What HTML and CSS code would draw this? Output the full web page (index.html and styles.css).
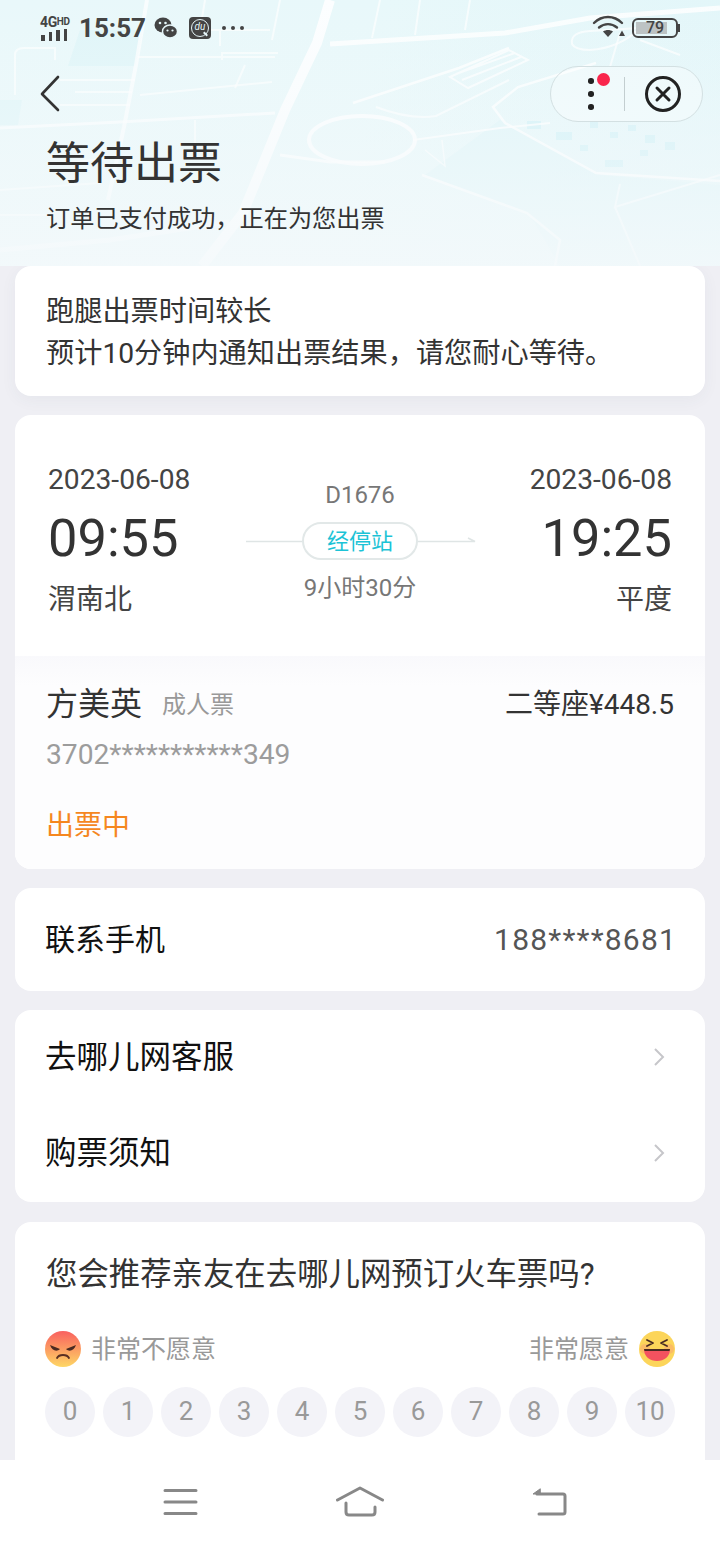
FILE: index.html
```html
<!DOCTYPE html>
<html lang="zh-CN">
<head>
    <meta charset="UTF-8">
    <title>等待出票</title>
    <meta name="viewport" content="width=device-width, initial-scale=1">
    <link rel="stylesheet" href="styles.css">
</head>
<body>
    <div class="page">
        <div class="content">
            <header class="hero">
                <svg class="map" width="720" height="266" viewBox="0 0 720 266" fill="none" stroke="#fff">
                    <defs>
                        <linearGradient id="fade" x1="0" y1="0" x2="0" y2="1">
                            <stop offset="0" stop-color="#f4f9fb" stop-opacity="0"/>
                            <stop offset="1" stop-color="#f4f9fb" stop-opacity=".85"/>
                        </linearGradient>
                    </defs>
                    <!-- tinted blocks -->
                    <path class="map-block" d="M80 30 H143 L135 66 H68 Z" stroke="none"/>
                    <path class="map-block" d="M0 100 H22 L18 125 H0 Z" stroke="none"/>
                    <path class="map-block" d="M500 120 L600 175 L720 185 V266 H560 L530 215 L425 175 Z" stroke="none"/>
                    <path class="map-tile" d="M527 121 h14 v8 h-14z M556 132 h16 v8 h-16z M590 122 h8 v6 h-8z M610 132 h8 v6 h-8z M628 125 h8 v6 h-8z M645 135 h10 v8 h-10z M665 142 h10 v8 h-10z M605 160 h18 v7 h-18z M640 150 h8 v6 h-8z M580 145 h8 v6 h-8z" stroke="none"/>
                    <!-- main roads -->
                    <path d="M330 0 L317 43 L285 110 L243 213 L202 266" stroke-width="10" stroke-opacity=".85"/>
                    <path d="M147 0 L136 65 L124 127 L108 200" stroke-width="4" stroke-opacity=".7"/>
                    <path d="M330 44 L505 33 L590 18 L720 8" stroke-width="5" stroke-opacity=".8"/>
                    <path d="M0 128 L120 122 L275 113" stroke-width="3" stroke-opacity=".7"/>
                    <path d="M0 250 L110 240 L229 222" stroke-width="5" stroke-opacity=".6"/>
                    <!-- side streets -->
                    <g stroke-width="2" stroke-opacity=".65">
                        <path d="M15 95 V55 Q15 48 24 48 H55 V60"/>
                        <path d="M138 57 H275 M222 60 V53 H278 M245 65 L235 88"/>
                        <path d="M60 80 H135 M75 92 H132 M60 105 H130"/>
                        <path d="M140 95 L272 82 M195 120 V160 M50 165 L110 158"/>
                        <path d="M280 0 L272 40 M205 0 L200 30 H270 M220 30 V46"/>
                        <path d="M380 0 L372 38 M420 0 L415 35 M470 0 L465 30"/>
                        <path d="M0 190 L100 183 M0 215 H50"/>
                    </g>
                    <!-- track -->
                    <ellipse cx="362" cy="140" rx="53" ry="24" stroke-width="4" stroke-opacity=".85"/>
                    <path d="M280 155 L330 162 L385 162" stroke-width="3" stroke-opacity=".8"/>
                    <!-- hatch block -->
                    <path d="M450 77 L509 50 L528 60 L468 88 Z M456 74 L515 53 M462 80 L521 57" stroke-width="2" stroke-opacity=".75"/>
                    <path d="M353 103 L459 68 L509 48" stroke-width="2.5" stroke-opacity=".8"/>
                    <path d="M376 107 Q410 120 436 116 L509 80" stroke-width="2" stroke-opacity=".7"/>
                    <!-- big loop -->
                    <path d="M596 63 L518 87 L493 107 L505 123 L596 173 L720 181" stroke-width="2.5" stroke-opacity=".8"/>
                    <path d="M413 140 L500 128 L550 123" stroke-width="2" stroke-opacity=".8"/>
                    <path d="M425 150 L445 166 L442 140" stroke-width="1.5" stroke-opacity=".7"/>
                    <path d="M422 175 L527 213 L560 240 L555 266" stroke-width="2.5" stroke-opacity=".75"/>
                    <path d="M620 184 L615 207 L720 175 M615 207 L640 266" stroke-width="2" stroke-opacity=".65"/>
                    <path d="M572 44 Q570 32 590 31 L640 28 Q620 48 590 50 Q575 50 572 44 Z" stroke-width="2" stroke-opacity=".7"/>
                    <path d="M620 33 L610 67 M640 40 L680 55" stroke-width="2" stroke-opacity=".7"/>
                    <rect width="720" height="266" y="0" fill="url(#fade)" stroke="none"/>
                </svg>
                <div class="statusbar">
                    <div class="signal">
                        <span class="signal-label">4G<small>HD</small></span>
                        <span class="signal-bars"><i class="b1"></i><i class="b2"></i><i class="b3"></i><i class="b4"></i></span>
                    </div>
                    <span class="clock">15:57</span>
                    <svg class="status-icon" width="24" height="24" viewBox="0 0 24 24" fill="#444">
                        <ellipse cx="9" cy="9" rx="8.5" ry="7.5"/>
                        <ellipse cx="16" cy="15.5" rx="7.5" ry="6.5" stroke="#e6f6f9" stroke-width="1.4"/>
                        <circle cx="6" cy="7" r="1.3" fill="#e6f6f9"/>
                        <circle cx="11.5" cy="7" r="1.3" fill="#e6f6f9"/>
                        <circle cx="13.5" cy="14.5" r="1.1" fill="#e6f6f9"/>
                        <circle cx="18.5" cy="14.5" r="1.1" fill="#e6f6f9"/>
                    </svg>
                    <span class="du-icon"><span class="du-ring">du</span></span>
                    <span class="status-dots"><i></i><i></i><i></i></span>
                    <div class="status-right">
                        <svg width="34" height="26" viewBox="0 0 34 26" fill="none" stroke="#444" stroke-width="2.4" stroke-linecap="round">
                            <path d="M2 8 C10 0 22 0 30 8"/>
                            <path d="M7 12.5 C12.5 8 19.5 8 25 12.5"/>
                            <path d="M16 22 L11 16.5 C14 14.5 18 14.5 21 16.5 Z" fill="#444" stroke="none"/>
                            <path d="M27 21 L30 15.5 L33 21 Z" fill="#444" stroke="none"/>
                        </svg>
                        <div class="battery">
                            <span class="battery-fill"></span>
                            <span class="battery-num">79</span>
                        </div>
                        <span class="battery-cap"></span>
                    </div>
                </div>
                <div class="topbar">
                    <svg class="back" width="24" height="40" viewBox="0 0 24 40" fill="none" stroke="#333" stroke-width="2.6" stroke-linecap="round" stroke-linejoin="round">
                        <path d="M19 3 L3 20 L19 36"/>
                    </svg>
                    <div class="capsule">
                        <div class="capsule-more">
                            <i></i><i></i><i></i>
                            <b class="red-dot"></b>
                        </div>
                        <span class="capsule-line"></span>
                        <svg width="38" height="38" viewBox="0 0 38 38" fill="none" stroke="#222" stroke-width="3" stroke-linecap="round">
                            <circle cx="19" cy="19" r="16.5"/>
                            <path d="M13 13 L25 25 M25 13 L13 25"/>
                        </svg>
                    </div>
                </div>
                <h1 class="title">等待出票</h1>
                <p class="subtitle">订单已支付成功，正在为您出票</p>
            </header>

            <main class="cards">
                <section class="card notice">
                    <p>跑腿出票时间较长</p>
                    <p>预计10分钟内通知出票结果，请您耐心等待。</p>
                </section>

                <section class="card ticket">
                    <div class="journey">
                        <div class="stop">
                            <div class="date">2023-06-08</div>
                            <div class="time">09:55</div>
                            <div class="station">渭南北</div>
                        </div>
                        <div class="train">
                            <div class="train-no">D1676</div>
                            <div class="via">
                                <svg class="via-line" width="231" height="8" viewBox="0 0 231 8" fill="none" stroke="#dfe5e5" stroke-width="1.5">
                                    <path d="M0 4.5 H229 L222 1"/>
                                </svg>
                                <span class="via-pill">经停站</span>
                            </div>
                            <div class="duration">9小时30分</div>
                        </div>
                        <div class="stop stop-end">
                            <div class="date">2023-06-08</div>
                            <div class="time">19:25</div>
                            <div class="station">平度</div>
                        </div>
                    </div>
                    <div class="passenger">
                        <div class="passenger-top">
                            <span class="name">方美英</span>
                            <span class="ticket-type">成人票</span>
                            <span class="seat">二等座¥448.5</span>
                        </div>
                        <div class="id-no">3702***********349</div>
                        <div class="ticket-status">出票中</div>
                    </div>
                </section>

                <section class="card contact">
                    <span class="contact-label">联系手机</span>
                    <span class="contact-phone">188****8681</span>
                </section>

                <section class="card links">
                    <div class="link-row">
                        <span>去哪儿网客服</span>
                        <svg width="12" height="20" viewBox="0 0 12 20" fill="none" stroke="#c6c6ca" stroke-width="2"><path d="M2 2 L10 10 L2 18"/></svg>
                    </div>
                    <div class="link-row">
                        <span>购票须知</span>
                        <svg width="12" height="20" viewBox="0 0 12 20" fill="none" stroke="#c6c6ca" stroke-width="2"><path d="M2 2 L10 10 L2 18"/></svg>
                    </div>
                </section>

                <section class="card survey">
                    <h2 class="question">您会推荐亲友在去哪儿网预订火车票吗?</h2>
                    <div class="scale-labels">
                        <div class="scale-side">
                            <svg width="36" height="36" viewBox="0 0 36 36">
                                <defs>
                                    <linearGradient id="angry" x1="0" y1="0" x2="0" y2="1">
                                        <stop offset="0" stop-color="#f9605f"/>
                                        <stop offset="1" stop-color="#fed765"/>
                                    </linearGradient>
                                </defs>
                                <circle cx="18" cy="18" r="18" fill="url(#angry)"/>
                                <path d="M5 14 L15 18 C12 21 7 20 5 14 Z M31 14 L21 18 C24 21 29 20 31 14 Z" fill="#4a2a22"/>
                                <path d="M12 27 C14 23 22 23 24 27" fill="none" stroke="#5a2f22" stroke-width="1.8" stroke-linecap="round"/>
                            </svg>
                            <span>非常不愿意</span>
                        </div>
                        <div class="scale-side">
                            <span>非常愿意</span>
                            <svg width="36" height="36" viewBox="0 0 36 36">
                                <circle cx="18" cy="18" r="18" fill="#fcd55a"/>
                                <circle cx="6" cy="18" r="5" fill="#fbb16a" opacity=".7"/>
                                <circle cx="30" cy="18" r="5" fill="#fbb16a" opacity=".7"/>
                                <path d="M8 9 L14 12 L8 15 M28 9 L22 12 L28 15" fill="none" stroke="#4a2a22" stroke-width="1.8" stroke-linecap="round" stroke-linejoin="round"/>
                                <path d="M5 18 H31 C31 26 25 30 18 30 C11 30 5 26 5 18 Z" fill="#f4525f"/>
                                <path d="M5 18 H31 L30.5 20 H5.5 Z" fill="#4a2a22"/>
                            </svg>
                        </div>
                    </div>
                    <div class="scale">
                        <span>0</span><span>1</span><span>2</span><span>3</span><span>4</span><span>5</span><span>6</span><span>7</span><span>8</span><span>9</span><span>10</span>
                    </div>
                </section>
            </main>
        </div>

        <nav class="navbar">
            <svg width="36" height="28" viewBox="0 0 36 28" fill="none" stroke="#888" stroke-width="3" stroke-linecap="round">
                <path d="M3 2.5 H34 M3 14 H34 M3 25.5 H34"/>
            </svg>
            <svg class="nav-home" width="48" height="32" viewBox="0 0 48 32" fill="none" stroke="#888" stroke-width="3" stroke-linecap="round" stroke-linejoin="round">
                <path d="M1.5 14 L24 2 L46.5 14"/>
                <path d="M10 17 V26 Q10 29 13 29 H36 Q39 29 39 26 V21"/>
            </svg>
            <svg class="nav-back" width="36" height="30" viewBox="0 0 36 30" fill="none" stroke="#888" stroke-width="3" stroke-linecap="round" stroke-linejoin="round">
                <path d="M6 7 H32 Q34 7 34 9 V25 Q34 27 32 27 H8"/>
                <path d="M9 2 L2 7 H9 Z" fill="#888" stroke-width="1"/>
            </svg>
        </nav>
    </div>
</body>
</html>
```

FILE: styles.css
```css
* {
    box-sizing: border-box;
}
html, body {
    margin: 0;
    padding: 0;
}
body {
    font-family: Roboto, "Noto Sans CJK SC", sans-serif;
    color: #333;
    background: #efeff4;
}
p, h1, h2 {
    margin: 0;
    font-weight: 400;
}
.page {
    width: 720px;
    height: 1544px;
    display: flex;
    flex-direction: column;
    overflow: hidden;
    background: #efeff4;
}
.content {
    flex: 1;
    min-height: 0;
    overflow: hidden;
}

/* hero */
.hero {
    position: relative;
    height: 266px;
    padding-top: 10px;
    overflow: hidden;
    background: linear-gradient(100deg, #e9f8fa 0%, #e8f8fa 50%, #e2f6f9 100%);
}
.map {
    position: absolute;
    left: 0;
    top: 0;
}
.map-block {
    fill: #d8f3f7;
    opacity: .6;
}
.map-tile {
    fill: #c6eef5;
    opacity: .7;
}
.statusbar {
    position: relative;
    display: flex;
    align-items: center;
    height: 36px;
    padding-left: 40px;
    color: #444;
}
.signal {
    width: 31px;
    margin-right: 8px;
}
.signal-label {
    display: block;
    font-size: 14px;
    font-weight: 700;
    line-height: 11px;
    letter-spacing: -.4px;
}
.signal-label small {
    font-size: 10px;
    vertical-align: 2px;
}
.signal-bars {
    display: flex;
    align-items: flex-end;
    gap: 4px;
    height: 12px;
    margin-top: 1px;
    padding-left: 1px;
}
.signal-bars i {
    display: block;
    width: 3.5px;
    background: #444;
}
.signal-bars .b1 { height: 6px; }
.signal-bars .b2 { height: 9px; }
.signal-bars .b3 { height: 11px; }
.signal-bars .b4 { height: 12px; }
.clock {
    font-size: 26px;
    font-weight: 700;
    line-height: 36px;
}
.status-icon {
    margin-left: 8px;
}
.du-icon {
    position: relative;
    display: flex;
    align-items: center;
    justify-content: center;
    width: 22px;
    height: 22px;
    margin-left: 11px;
    background: #444;
    border-radius: 4px;
}
.du-icon::after {
    content: "";
    position: absolute;
    right: 3px;
    bottom: 4px;
    width: 5px;
    height: 2px;
    background: #e6f6f9;
    transform: rotate(45deg);
}
.du-ring {
    width: 18px;
    height: 18px;
    border: 1.5px solid #e6f6f9;
    border-radius: 50%;
    color: #e6f6f9;
    font-size: 10px;
    font-style: italic;
    line-height: 14px;
    text-align: center;
}
.status-dots {
    display: flex;
    gap: 5px;
    margin-left: 11px;
}
.status-dots i {
    width: 4px;
    height: 4px;
    background: #444;
    border-radius: 50%;
}
.status-right {
    display: flex;
    align-items: center;
    margin-left: auto;
    padding-right: 40px;
}
.battery {
    position: relative;
    width: 46px;
    height: 20px;
    margin-left: 6px;
    border: 2px solid #444;
    border-radius: 6px;
    padding: 2px;
}
.battery-fill {
    display: block;
    width: 31px;
    height: 12px;
    background: #bdc3c4;
}
.battery-num {
    position: absolute;
    left: 0;
    right: 0;
    top: -1px;
    font-size: 16px;
    font-weight: 500;
    line-height: 18px;
    text-align: center;
}
.battery-cap {
    width: 2px;
    height: 8px;
    background: #444;
}
.topbar {
    position: relative;
    display: flex;
    align-items: center;
    justify-content: space-between;
    height: 56px;
    margin-top: 20px;
    padding: 0 17px 0 39px;
}
.capsule {
    display: flex;
    align-items: center;
    width: 153px;
    height: 56px;
    padding-left: 37px;
    border: 1px solid #d3e0e2;
    border-radius: 28px;
    background: rgba(255, 255, 255, .35);
}
.capsule-more {
    position: relative;
    display: flex;
    flex-direction: column;
    gap: 7.5px;
    width: 5.5px;
}
.capsule-more i {
    width: 5.5px;
    height: 5.5px;
    background: #222;
    border-radius: 50%;
}
.red-dot {
    position: absolute;
    left: 9px;
    top: -5px;
    width: 13px;
    height: 13px;
    background: #f9254c;
    border-radius: 50%;
}
.capsule-line {
    width: 1px;
    height: 34px;
    margin: 0 19px 0 30.5px;
    background: #c3ced0;
}
.title {
    position: relative;
    margin: 16px 0 0 46px;
    font-size: 44px;
    line-height: 52px;
}
.subtitle {
    position: relative;
    margin: 12px 0 0 46px;
    font-size: 24.2px;
    line-height: 34px;
}

/* cards */
.cards {
    display: flex;
    flex-direction: column;
    gap: 19px;
    padding: 0 15px;
}
.card {
    background: #fff;
    border-radius: 16px;
    overflow: hidden;
}
.notice {
    padding: 25px 31px 21px;
    font-size: 28.2px;
    line-height: 42px;
    height: 130px;
    box-shadow: 0 4px 16px rgba(60, 80, 90, .05);
}

/* ticket */
.journey {
    display: grid;
    grid-template-columns: 1fr 230px 1fr;
    height: 241px;
    padding: 48px 33px 0;
}
.date {
    font-size: 28.2px;
    line-height: 34px;
    color: #444;
}
.time {
    margin-top: 11px;
    font-size: 52.4px;
    line-height: 60px;
}
.station {
    margin-top: 14px;
    font-size: 28px;
    line-height: 36px;
    color: #444;
}
.stop-end {
    text-align: right;
}
.train {
    display: flex;
    flex-direction: column;
    align-items: center;
    padding-top: 16px;
    color: #777;
}
.train-no {
    font-size: 24px;
    line-height: 32px;
}
.via {
    position: relative;
    display: flex;
    justify-content: center;
    width: 230px;
    margin-top: 11px;
}
.via-line {
    position: absolute;
    left: 1px;
    top: 15px;
}
.via-pill {
    position: relative;
    width: 116px;
    height: 38px;
    border: 2px solid #e2e8e8;
    border-radius: 19px;
    background: #fff;
    color: #1cc3d6;
    font-size: 22px;
    line-height: 36px;
    text-align: center;
}
.duration {
    margin-top: 10px;
    font-size: 24px;
    line-height: 36px;
}
.passenger {
    height: 213px;
    padding: 28px 31px 0;
    background: linear-gradient(#f9f9fc, #fdfdfe 30px);
}
.passenger-top {
    display: flex;
    align-items: center;
    height: 40px;
}
.name {
    font-size: 32px;
    line-height: 40px;
}
.ticket-type {
    margin: 0 0 4px 20px;
    font-size: 24px;
    color: #999;
}
.seat {
    margin: 0 0 4px auto;
    font-size: 28px;
}
.id-no {
    margin-top: 11px;
    font-size: 28.2px;
    line-height: 40px;
    color: #9c9c9c;
}
.ticket-status {
    margin-top: 31px;
    font-size: 28px;
    line-height: 40px;
    color: #f5871f;
}

/* contact + links */
.contact {
    display: flex;
    align-items: center;
    justify-content: space-between;
    height: 103px;
    padding: 0 28px 0 30px;
}
.contact-label {
    margin-bottom: 6px;
    font-size: 30px;
    color: #111;
}
.contact-phone {
    font-size: 30px;
    letter-spacing: 1.2px;
    color: #555;
}
.link-row {
    display: flex;
    align-items: center;
    justify-content: space-between;
    height: 96px;
    padding: 0 40px 0 30px;
    font-size: 31.5px;
    color: #111;
}
.link-row span {
    margin-bottom: 8px;
}
.link-row svg {
    margin-bottom: 2px;
}

/* survey */
.survey {
    height: 300px;
    margin-top: 1px;
    padding: 31px 30px 0;
}
.question {
    margin-left: 1px;
    font-size: 31.4px;
    line-height: 44px;
}
.scale-labels {
    display: flex;
    justify-content: space-between;
    height: 36px;
    margin-top: 34px;
}
.scale-side {
    display: flex;
    align-items: center;
    gap: 10px;
    font-size: 25px;
    color: #999;
}
.scale-side span {
    margin-top: 2px;
    line-height: 30px;
}
.scale {
    display: flex;
    gap: 8px;
    margin-top: 20px;
}
.scale span {
    width: 50px;
    height: 50px;
    background: #f3f3f8;
    border-radius: 50%;
    color: #999;
    font-size: 26px;
    line-height: 48px;
    text-align: center;
}

/* bottom nav */
.navbar {
    position: relative;
    display: flex;
    align-items: center;
    flex: none;
    height: 84px;
    padding-left: 162px;
    background: #fff;
}
.nav-home {
    margin-left: 138px;
}
.nav-back {
    margin-left: 147px;
}
```
